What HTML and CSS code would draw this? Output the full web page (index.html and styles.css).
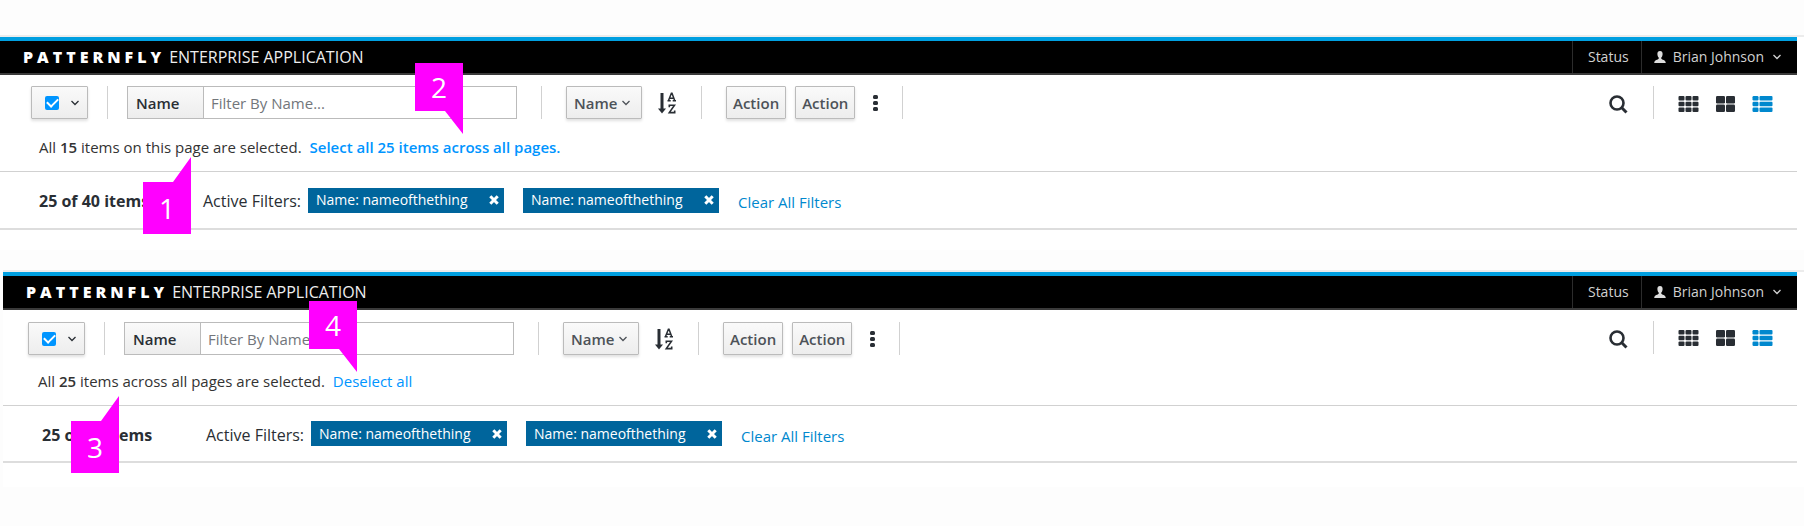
FILE: index.html
```
<!DOCTYPE html>
<html lang="en">
<head>
<meta charset="utf-8">
<title>PatternFly Enterprise Application</title>
<link rel="stylesheet" href="styles.css">
</head>
<body>
<svg class="sprite" aria-hidden="true">
  <symbol id="chevron" viewBox="0 0 8 6"><path d="M.5 1L4 4.500 7.500 1" fill="none" stroke="currentColor" stroke-width="1.3"/></symbol>
  <symbol id="user" viewBox="0 0 12 12"><path d="M6 0C3.900 0 3.300 1.500 3.400 3.300c.1 1.500.6 2.600 1.300 3.300v1.200C4 8.800.4 8.800.2 12h11.600C11.600 8.800 8 8.800 7.300 7.800V6.600c.7-.7 1.200-1.800 1.300-3.300C8.700 1.500 8.100 0 6 0z" fill="currentColor"/></symbol>
  <symbol id="sort" viewBox="0 0 18 22"><g fill="none" stroke="currentColor"><path d="M4 1v17" stroke-width="3"/><path d="M10.500 8.600l2.900-7.400h.6l2.700 7.400M11.600 6.300h4.300M9.500 8.700h3.200M14.700 8.700H18" stroke-width="1.500"/><path d="M11.300 15.200v-1.900h5.200L11.300 20.600h5.400v-2.200" stroke-width="1.600"/></g><path d="M0 16.500h8L4 21.500z" fill="currentColor"/></symbol>
  <symbol id="kebab" viewBox="0 0 6 18"><g fill="currentColor"><rect x="1" y="1" width="5" height="4" rx="1.500"/><rect x="1" y="7" width="5" height="4" rx="1.500"/><rect x="1" y="13" width="5" height="4" rx="1.500"/></g></symbol>
  <symbol id="search" viewBox="0 0 19 19"><circle cx="8" cy="8" r="6.500" fill="none" stroke="currentColor" stroke-width="2.600"/><path d="M12.800 12.800l4.700 4.700" stroke="currentColor" stroke-width="3"/></symbol>
  <symbol id="th" viewBox="0 0 20 16"><g fill="currentColor"><rect width="6" height="4.500" rx="1"/><rect x="7" width="6" height="4.500" rx="1"/><rect x="14" width="6" height="4.500" rx="1"/><rect y="5.750" width="6" height="4.500" rx="1"/><rect x="7" y="5.750" width="6" height="4.500" rx="1"/><rect x="14" y="5.750" width="6" height="4.500" rx="1"/><rect y="11.500" width="6" height="4.500" rx="1"/><rect x="7" y="11.500" width="6" height="4.500" rx="1"/><rect x="14" y="11.500" width="6" height="4.500" rx="1"/></g></symbol>
  <symbol id="th-large" viewBox="0 0 19 16"><g fill="currentColor"><rect width="9" height="7.500" rx="1.200"/><rect x="10" width="9" height="7.500" rx="1.200"/><rect y="8.500" width="9" height="7.500" rx="1.200"/><rect x="10" y="8.500" width="9" height="7.500" rx="1.200"/></g></symbol>
  <symbol id="list" viewBox="0 0 20 16"><g fill="currentColor"><rect width="6" height="4.500" rx="1.200"/><rect x="7" width="13" height="4.500" rx="1"/><rect y="5.750" width="6" height="4.500" rx="1.200"/><rect x="7" y="5.750" width="13" height="4.500" rx="1"/><rect y="11.500" width="6" height="4.500" rx="1.200"/><rect x="7" y="11.500" width="13" height="4.500" rx="1"/></g></symbol>
  <symbol id="close" viewBox="0 0 10 10"><path d="M1.300 1.300l7.400 7.400M8.700 1.300L1.300 8.700" stroke="currentColor" stroke-width="3"/></symbol>
  <symbol id="pin-up" viewBox="0 0 48 77"><path d="M0 25h30L48 0v77H0z" fill="#f0f"/></symbol>
  <symbol id="pin-down" viewBox="0 0 48 71"><path d="M0 0h48v71L30 48H0z" fill="#f0f"/></symbol>
</svg>

<section class="panel panel-page">
  <header class="masthead">
    <div class="brand"><b class="brand-name">PATTERNFLY</b><span>ENTERPRISE APPLICATION</span></div>
    <nav class="nav">
      <a class="nav-item" href="#status">Status</a>
      <a class="nav-item nav-user" href="#user"><svg class="icon-user"><use href="#user"/></svg>Brian Johnson<svg class="icon-chevron"><use href="#chevron"/></svg></a>
    </nav>
  </header>
  <div class="toolbar">
    <div class="btn bulk">
      <input class="tick" type="checkbox" aria-label="Select items" checked>
      <button class="plain" aria-label="Selection options"><svg class="icon-chevron"><use href="#chevron"/></svg></button>
    </div>
    <span class="divider divider-first"></span>
    <div class="filter">
      <select class="filter-field" aria-label="Filter field"><option>Name</option></select>
      <input class="filter-text" type="text" placeholder="Filter By Name..." aria-label="Filter by name">
    </div>
    <span class="divider"></span>
    <div class="sort-field"><select class="btn sort-select" aria-label="Sort by"><option>Name</option></select><svg class="icon-chevron"><use href="#chevron"/></svg></div>
    <button class="plain sort" aria-label="Sort ascending"><svg class="icon-sort"><use href="#sort"/></svg></button>
    <span class="divider"></span>
    <div class="actions"><button class="btn">Action</button><button class="btn">Action</button></div>
    <button class="plain kebab" aria-label="More actions"><svg class="icon-kebab"><use href="#kebab"/></svg></button>
    <span class="divider"></span>
    <div class="views">
      <button class="plain" aria-label="Search"><svg class="icon-search"><use href="#search"/></svg></button>
      <span class="divider"></span>
      <button class="plain" aria-label="Tile view"><svg class="icon-grid"><use href="#th"/></svg></button>
      <button class="plain" aria-label="Card view"><svg class="icon-grid"><use href="#th-large"/></svg></button>
      <button class="plain active" aria-label="List view"><svg class="icon-grid"><use href="#list"/></svg></button>
    </div>
  </div>
  <p class="message">All <b>15</b> items on this page are selected. <a class="message-link strong" href="#all">Select all 25 items across all pages.</a></p>
  <div class="results">
    <span class="count">25 of 40 items</span>
    <span class="label">Active Filters:</span>
    <span class="chip">Name: nameofthething<button class="plain" aria-label="Remove filter"><svg class="icon-close"><use href="#close"/></svg></button></span>
    <span class="chip">Name: nameofthething<button class="plain" aria-label="Remove filter"><svg class="icon-close"><use href="#close"/></svg></button></span>
    <a class="clear" href="#clear">Clear All Filters</a>
  </div>
  <div class="pin pin-up pin-1"><svg><use href="#pin-up"/></svg><span>1</span></div>
  <div class="pin pin-down pin-2"><svg><use href="#pin-down"/></svg><span>2</span></div>
</section>

<section class="panel panel-all">
  <header class="masthead">
    <div class="brand"><b class="brand-name">PATTERNFLY</b><span>ENTERPRISE APPLICATION</span></div>
    <nav class="nav">
      <a class="nav-item" href="#status">Status</a>
      <a class="nav-item nav-user" href="#user"><svg class="icon-user"><use href="#user"/></svg>Brian Johnson<svg class="icon-chevron"><use href="#chevron"/></svg></a>
    </nav>
  </header>
  <div class="toolbar">
    <div class="btn bulk">
      <input class="tick" type="checkbox" aria-label="Select items" checked>
      <button class="plain" aria-label="Selection options"><svg class="icon-chevron"><use href="#chevron"/></svg></button>
    </div>
    <span class="divider divider-first"></span>
    <div class="filter">
      <select class="filter-field" aria-label="Filter field"><option>Name</option></select>
      <input class="filter-text" type="text" placeholder="Filter By Name..." aria-label="Filter by name">
    </div>
    <span class="divider"></span>
    <div class="sort-field"><select class="btn sort-select" aria-label="Sort by"><option>Name</option></select><svg class="icon-chevron"><use href="#chevron"/></svg></div>
    <button class="plain sort" aria-label="Sort ascending"><svg class="icon-sort"><use href="#sort"/></svg></button>
    <span class="divider"></span>
    <div class="actions"><button class="btn">Action</button><button class="btn">Action</button></div>
    <button class="plain kebab" aria-label="More actions"><svg class="icon-kebab"><use href="#kebab"/></svg></button>
    <span class="divider"></span>
    <div class="views">
      <button class="plain" aria-label="Search"><svg class="icon-search"><use href="#search"/></svg></button>
      <span class="divider"></span>
      <button class="plain" aria-label="Tile view"><svg class="icon-grid"><use href="#th"/></svg></button>
      <button class="plain" aria-label="Card view"><svg class="icon-grid"><use href="#th-large"/></svg></button>
      <button class="plain active" aria-label="List view"><svg class="icon-grid"><use href="#list"/></svg></button>
    </div>
  </div>
  <p class="message">All <b>25</b> items across all pages are selected. <a class="message-link" href="#none">Deselect all</a></p>
  <div class="results">
    <span class="count">25 of 40 items</span>
    <span class="label">Active Filters:</span>
    <span class="chip">Name: nameofthething<button class="plain" aria-label="Remove filter"><svg class="icon-close"><use href="#close"/></svg></button></span>
    <span class="chip">Name: nameofthething<button class="plain" aria-label="Remove filter"><svg class="icon-close"><use href="#close"/></svg></button></span>
    <a class="clear" href="#clear">Clear All Filters</a>
  </div>
  <div class="pin pin-up pin-3"><svg><use href="#pin-up"/></svg><span>3</span></div>
  <div class="pin pin-down pin-4"><svg><use href="#pin-down"/></svg><span>4</span></div>
</section>
</body>
</html>
```
FILE: styles.css
```
* { box-sizing: border-box; }
body {
  margin: 0;
  padding-top: 35px;
  background: #fdfdfd;
  color: #333;
  font: 15px/20px "Open Sans", "Noto Sans", sans-serif;
}
svg { display: block; }
a { text-decoration: none; }
.sprite { position: absolute; width: 0; height: 0; }

.panel { position: relative; padding-right: 7px; border-top: 2px solid #ececec; background: #fff; }
.panel-page { padding-bottom: 20px; margin-bottom: 20px; }
.panel-all { margin-left: 3px; padding-bottom: 24px; }

.masthead {
  display: flex;
  justify-content: space-between;
  height: 38px;
  border-top: 4px solid #009fe0;
  border-bottom: 2px solid #3a3a3a;
  background: #000;
  color: #eee;
}
.brand { display: flex; align-items: center; gap: 4px; padding-left: 23px; font-size: 16px; }
.brand-name { font-weight: 800; letter-spacing: 4px; color: #fff; }
.nav { display: flex; font-size: 14px; }
.nav-item {
  display: flex;
  align-items: center;
  padding: 0 12px 0 15px;
  border-left: 1px solid #2c2c2c;
  color: #d1d1d1;
}
.nav-user { padding: 0 16px 0 12px; }
.icon-user { width: 12px; height: 12px; margin-right: 7px; color: #ddd; }
.icon-chevron { width: 8px; height: 6px; }
.nav-user .icon-chevron { margin-left: 9px; }

.toolbar { display: flex; align-items: center; padding: 11px 24px 0 31px; }
.panel-all .toolbar { padding: 12px 24px 0 25px; }
.btn {
  height: 33px;
  padding: 0 6px;
  border: 1px solid #bbb;
  border-radius: 1px;
  background: linear-gradient(#fafafa, #ededed);
  box-shadow: 0 2px 3px rgba(3, 3, 3, .12);
  color: #4d5258;
  font: 600 15px/20px "Open Sans", "Noto Sans", sans-serif;
}
.plain { display: flex; padding: 0; border: 0; background: none; color: #292e34; }
.bulk { display: flex; align-items: center; gap: 12px; width: 57px; padding: 0 0 0 13px; }
.tick {
  appearance: none;
  width: 14px;
  height: 14px;
  margin: 0;
  border-radius: 2px;
  background: #0095ff;
  display: grid;
  place-items: center;
}
.tick::before {
  content: "";
  width: 9px;
  height: 5px;
  margin-bottom: 3px;
  border: solid #fff;
  border-width: 0 0 2px 2px;
  transform: rotate(-45deg);
}
.divider { width: 1px; height: 33px; margin: 0 24px; background: #d1d1d1; }
.divider-first { margin: 0 19px; }
.filter { display: flex; width: 390px; height: 33px; border: 1px solid #bbb; }
.filter-field {
  appearance: none;
  width: 76px;
  padding: 0 8px;
  border: 0;
  border-right: 1px solid #bbb;
  border-radius: 0;
  background: linear-gradient(#fafafa, #ededed);
  color: #292e34;
  font: 600 15px/20px "Open Sans", "Noto Sans", sans-serif;
}
.filter-text {
  flex: 1;
  min-width: 0;
  padding: 0 7px;
  border: 0;
  color: #333;
  font: 15px/20px "Open Sans", "Noto Sans", sans-serif;
}
.filter-text::placeholder { color: #72767b; }
.sort-field { display: grid; align-items: center; color: #4d5258; }
.sort-field > * { grid-area: 1 / 1; }
.sort-field .icon-chevron { justify-self: end; margin-right: 12px; pointer-events: none; }
.sort-select { appearance: none; width: 76px; padding: 0 7px; }
.sort { margin: 0 1px 0 16px; }
.icon-sort { width: 18px; height: 22px; }
.actions { display: flex; gap: 9px; }
.kebab { margin-left: 17px; }
.icon-kebab { width: 6px; height: 18px; }
.views { display: flex; align-items: center; gap: 16px; margin-left: auto; }
.views .divider { margin: 0 8px 0 9px; }
.icon-search { width: 19px; height: 19px; margin-top: 4px; }
.icon-grid { width: 21px; height: 16px; margin-top: 2px; }
.panel-all .views { margin-top: -3px; }
.active { color: #0088ce; }

.message { margin: 0; padding: 18px 39px 14px; border-bottom: 1px solid #d1d1d1; }
.message b { font-weight: 600; }
.message-link { margin-left: 4px; color: #0095ff; font-weight: 500; }
.message-link.strong { font-weight: 600; }
.panel-all .message { padding: 16px 35px 14px; }

.results { display: flex; align-items: center; height: 58px; padding: 0 39px; border-bottom: 2px solid #ddd; color: #292e34; }
.panel-all .results { height: 57px; }
.count { width: 164px; padding-top: 2px; font-size: 16px; font-weight: 700; }
.label { width: 105px; padding-top: 2px; font-size: 16px; }
.chip {
  display: flex;
  align-items: center;
  justify-content: space-between;
  width: 196px;
  height: 25px;
  margin-right: 19px;
  padding: 0 5px 0 8px;
  background: #00659c;
  color: #fff;
  font-size: 14px;
  font-weight: 500;
}
.chip .plain { color: #fff; }
.icon-close { width: 10px; height: 10px; }
.clear { padding-top: 4px; color: #0088ce; }

.pin { position: absolute; display: grid; width: 48px; color: #fff; font-size: 28px; line-height: 48px; text-align: center; }
.pin > * { grid-area: 1 / 1; }
.pin svg { width: 48px; }
.pin-up svg { height: 77px; }
.pin-up span { padding-top: 27px; }
.pin-down svg { height: 71px; }
.pin-1 { left: 143px; top: 120px; }
.pin-2 { left: 415px; top: 26px; }
.pin-3 { left: 68px; top: 124px; }
.pin-4 { left: 306px; top: 29px; }
```
